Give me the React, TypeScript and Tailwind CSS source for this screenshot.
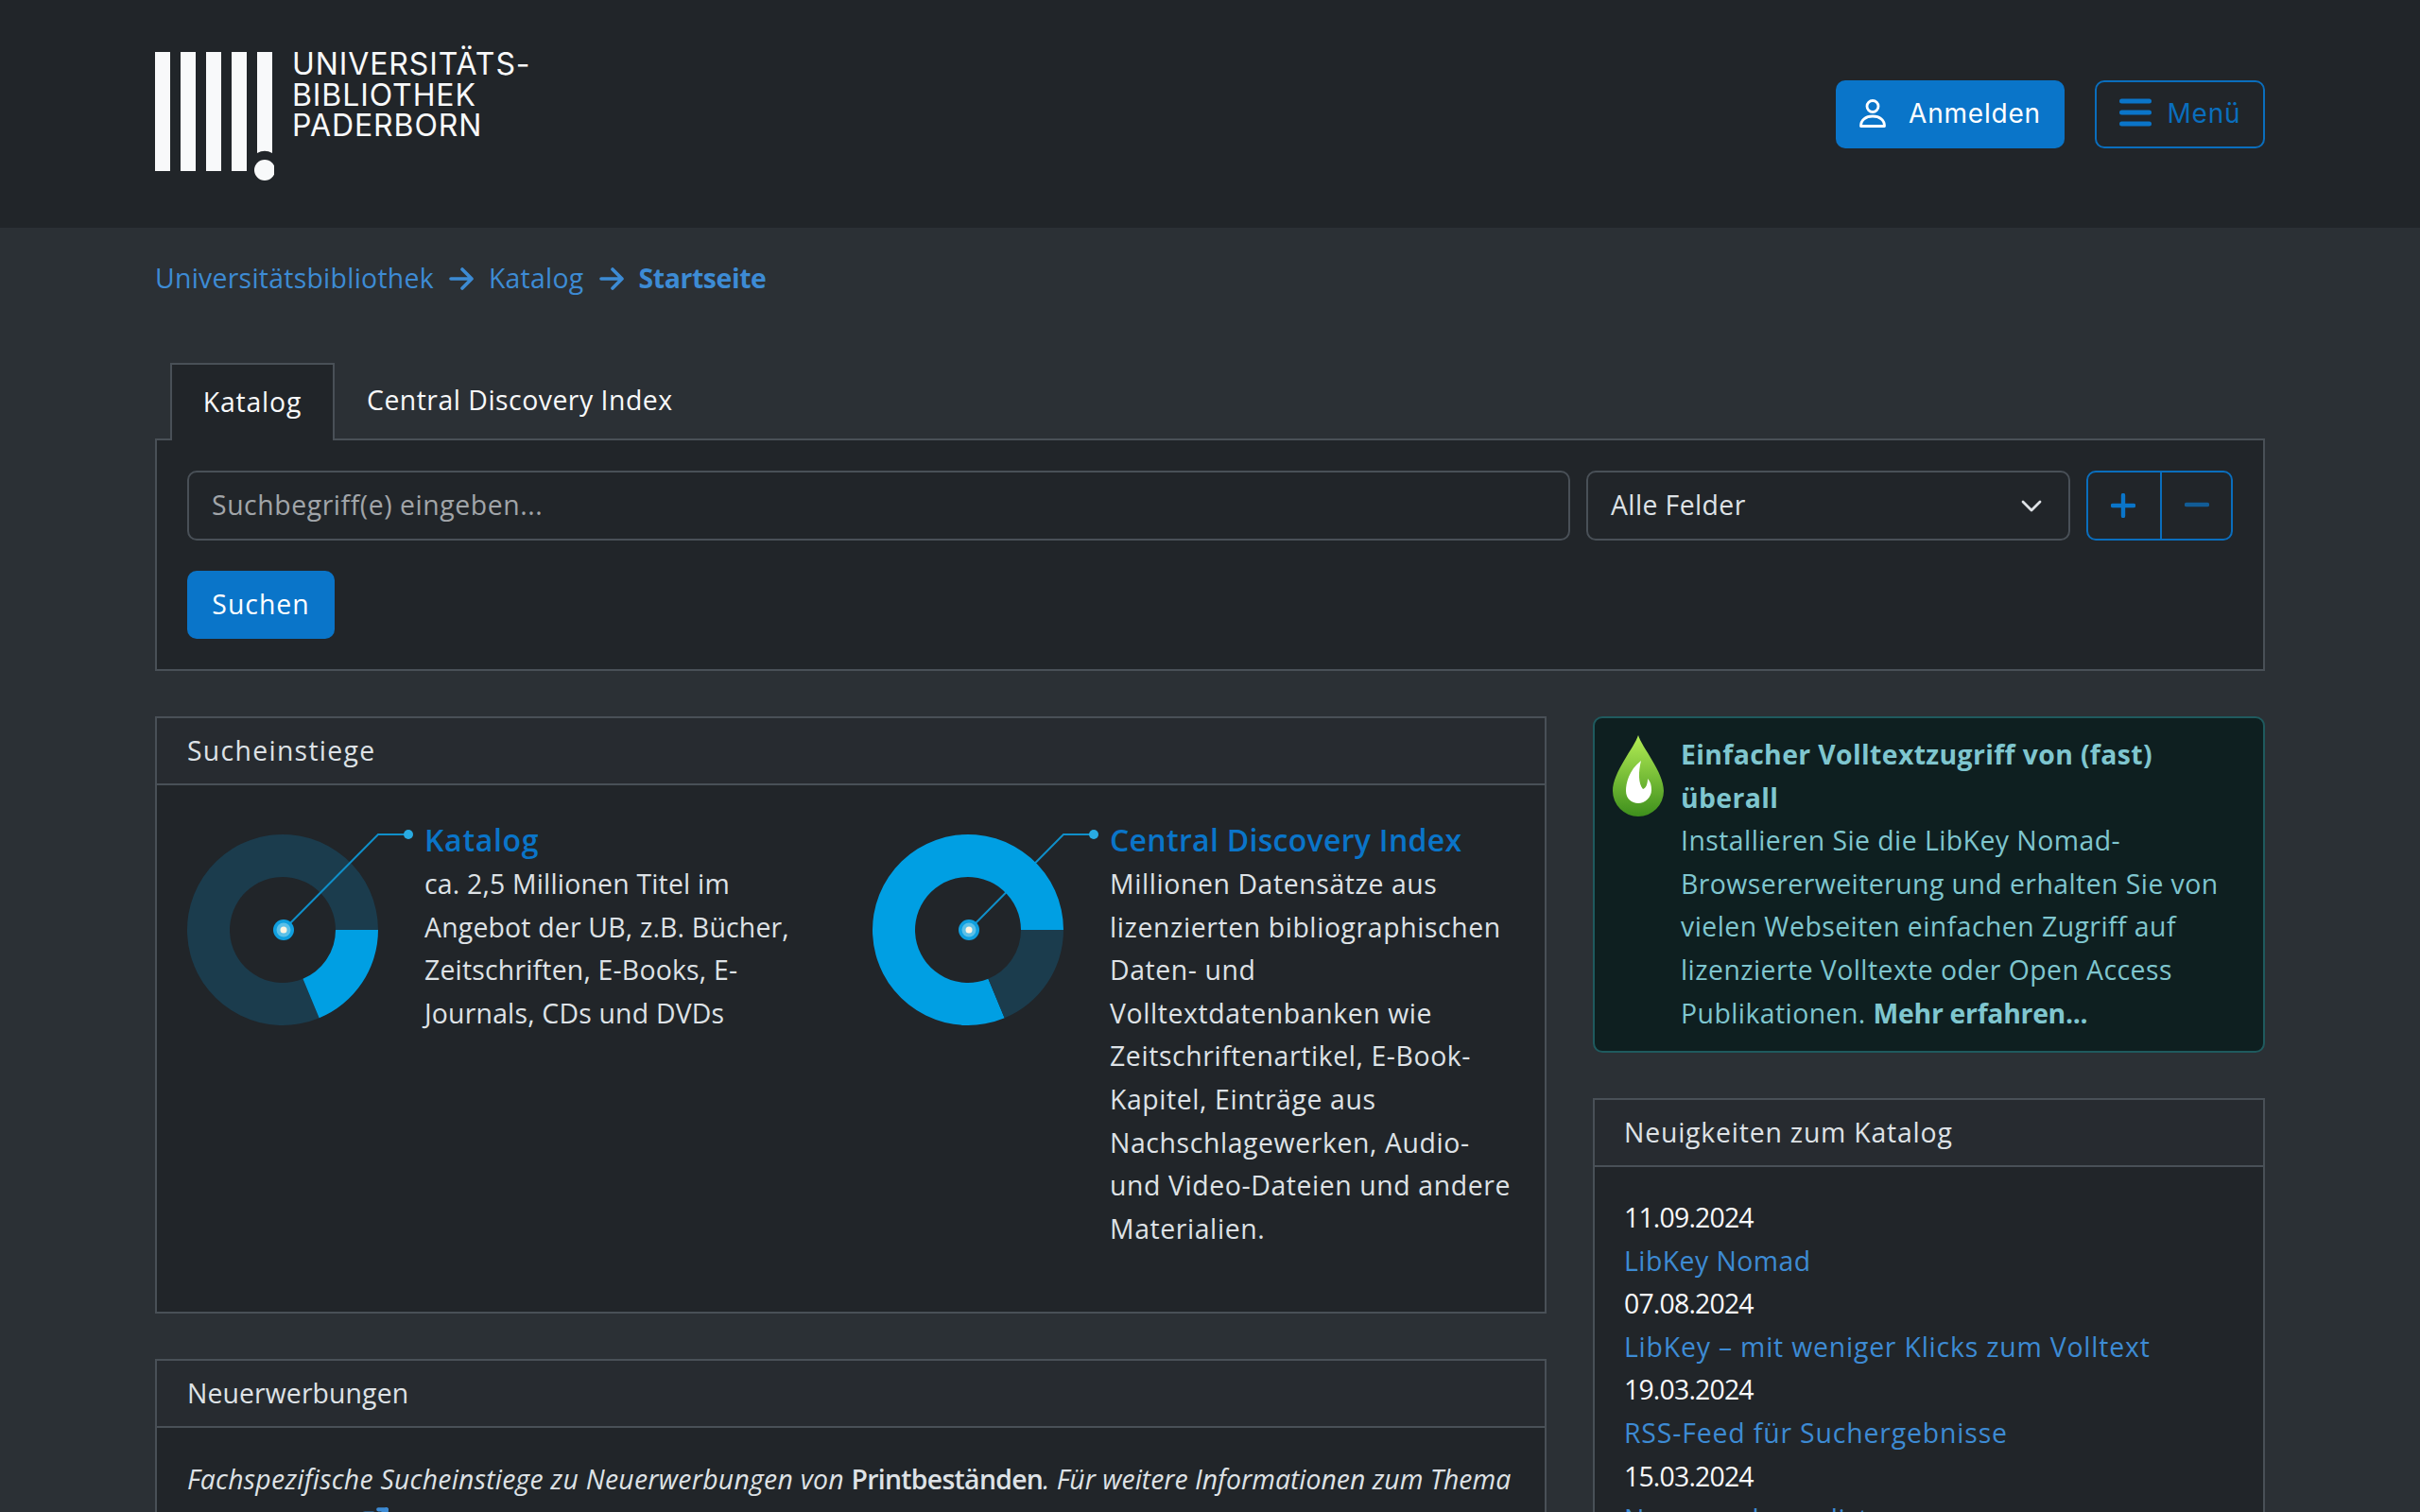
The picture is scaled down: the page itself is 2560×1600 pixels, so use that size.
import React from "react";
import { ExternalLink } from "lucide-react";

const body = "font-['Open_Sans','Noto_Sans',sans-serif]";

function Donut({ big, under }: { big: boolean; under: boolean }) {
  const bright = "#009fe3";
  const dim = "#1b3c4d";
  const cx = 101;
  const cy = 118;
  const ex = cx + 101 * Math.cos((67.5 * Math.PI) / 180);
  const ey = cy + 101 * Math.sin((67.5 * Math.PI) / 180);
  const ix = cx + 56 * Math.cos((67.5 * Math.PI) / 180);
  const iy = cy + 56 * Math.sin((67.5 * Math.PI) / 180);
  const small = `M${cx + 101} ${cy} A101 101 0 0 1 ${ex} ${ey} L${ix} ${iy} A56 56 0 0 0 ${cx + 56} ${cy} Z`;
  const large = `M${cx + 101} ${cy} A101 101 0 1 0 ${ex} ${ey} L${ix} ${iy} A56 56 0 1 1 ${cx + 56} ${cy} Z`;
  const line = (
    <path d={`M${cx + 1} ${cy} L${cx + 101} ${cy - 101} H${cx + 133}`} fill="none" stroke="#0f8fc9" strokeWidth="2" />
  );
  return (
    <svg width="240" height="225" viewBox="0 0 240 225" className="shrink-0 block">
      {under && line}
      <path d={large} fill={big ? bright : dim} />
      <path d={small} fill={big ? dim : bright} />
      {!under && line}
      <circle cx={cx + 133} cy={cy - 101} r="5" fill="#29abe2" />
      <circle cx={cx + 1} cy={cy} r="11" fill="#0f9fdf" />
      <circle cx={cx + 1} cy={cy} r="7.5" fill="#5cc0e8" />
      <circle cx={cx + 1} cy={cy} r="3.5" fill="#fff4e0" />
    </svg>
  );
}

function Card({ title, children, className, titleClass }: { title: string; children: React.ReactNode; className?: string; titleClass?: string }) {
  return (
    <section className={`border-2 border-[#495057] bg-[#212529] ${className ?? ""}`}>
      <h2 className={`h-[71px] flex items-center px-[32px] bg-[#272b30] border-b-2 border-[#495057] text-[#dee2e6] text-[28.4px] font-normal ${titleClass ?? ""}`}>
        {title}
      </h2>
      {children}
    </section>
  );
}

function Arrow() {
  return (
    <svg width="26" height="24" viewBox="0 0 26 24" fill="none" stroke="#3d8bd4" strokeWidth="3.6" strokeLinecap="round" strokeLinejoin="round">
      <path d="M2 12H24M14 2l10 10-10 10" />
    </svg>
  );
}

export default function App() {
  return (
    <div className={`h-[1600px] overflow-hidden bg-[#2b3035] text-[#dee2e6] text-[28.4px] leading-[45.6px] tracking-[0.45px] ${body}`}>
      <header className="h-[241px] bg-[#212529] px-[164px] flex items-center justify-between">
        <div className="flex items-start self-start pt-[55px]">
          <svg width="126" height="138" viewBox="0 0 126 138" className="block">
            <g fill="#f8f9fa">
              <rect x="0" y="0" width="16" height="126" />
              <rect x="27" y="0" width="16" height="126" />
              <rect x="54" y="0" width="16" height="126" />
              <rect x="81" y="0" width="16" height="126" />
              <path d="M108 0h16v107a16 16 0 0 0-16 0z" />
              <circle cx="116" cy="125" r="11" />
            </g>
          </svg>
          <div className="ml-[19px] -mt-[3px] font-['Inter',sans-serif] text-[32px] leading-[32.5px] text-[#f8f9fa] tracking-[0.9px]">
            <div>UNIVERSITÄTS-</div>
            <div>BIBLIOTHEK</div>
            <div>PADERBORN</div>
          </div>
        </div>
        <div className="flex gap-[32px] font-['Inter',sans-serif] text-[28px] tracking-[0.8px]">
          <button className="h-[72px] w-[242px] rounded-[10px] bg-[#0a75c9] text-white flex items-center justify-center gap-[24px]">
            <svg width="28" height="30" viewBox="0 0 28 30" fill="none" stroke="white" strokeWidth="2.8" strokeLinejoin="round" className="-mt-[2px]">
              <circle cx="14" cy="7.5" r="6" />
              <path d="M1.5 28.5c0-6.5 5-10.5 12.500-10.500s12.500 4 12.500 10.500z" />
            </svg>
            Anmelden
          </button>
          <button className="h-[72px] w-[180px] rounded-[10px] border-2 border-[#0a6ebd] text-[#0a6ebd] flex items-center justify-center gap-[17px]">
            <svg width="34" height="30" viewBox="0 0 34 30" fill="none" stroke="#0a75c9" strokeWidth="5" strokeLinecap="round" className="-mt-[4px]">
              <path d="M2.500 3h29M2.500 15h29M2.500 27h29" />
            </svg>
            Menü
          </button>
        </div>
      </header>

      <main className="px-[164px]">
        <nav className="flex items-center h-[107px] pt-[1px] text-[#3d8bd4] gap-[16px] tracking-[0.27px]">
          <span>Universitätsbibliothek</span>
          <Arrow />
          <span>Katalog</span>
          <Arrow />
          <span className="font-bold tracking-[-0.4px]">Startseite</span>
        </nav>

        <div className="pl-[16px] flex mt-[36px] h-[80px] relative z-10 text-[#f8f9fa]">
          <div className="w-[174px] h-[82px] border-2 border-b-0 border-[#495057] bg-[#212529] flex items-center justify-center tracking-[0.8px]">Katalog</div>
          <div className="px-[34px] flex items-center tracking-[0.5px]">Central Discovery Index</div>
        </div>
        <section className="h-[246px] border-2 border-[#495057] bg-[#212529] px-[32px] pt-[32px]">
          <div className="flex gap-[17px] h-[74px]">
            <div className="flex-1 rounded-[10px] border-2 border-[#495057] flex items-center px-[24px] text-[#a1a5a9] tracking-[0.56px]">Suchbegriff(e) eingeben...</div>
            <div className="w-[512px] rounded-[10px] border-2 border-[#495057] flex items-center justify-between pl-[24px] pr-[28px] tracking-[0.4px]">
              Alle Felder
              <svg width="22" height="14" viewBox="0 0 22 14" fill="none" stroke="#dee2e6" strokeWidth="2.800" strokeLinecap="round" strokeLinejoin="round">
                <path d="M2 3l9 9 9-9" />
              </svg>
            </div>
            <div className="flex w-[155px] rounded-[10px] border-2 border-[#0a6ebd]">
              <div className="w-[78px] border-r-2 border-[#0a6ebd] flex items-center justify-center pr-[2px]">
                <svg width="26" height="26" viewBox="0 0 26 26" stroke="#0a75c9" strokeWidth="4.400" strokeLinecap="round"><path d="M13 2v22M2 13h22" /></svg>
              </div>
              <div className="flex-1 flex items-center justify-center">
                <svg width="26" height="26" viewBox="0 0 26 26" stroke="#125c96" strokeWidth="4.400" strokeLinecap="round"><path d="M2 12h22" /></svg>
              </div>
            </div>
          </div>
          <button className="mt-[32px] h-[72px] w-[156px] rounded-[10px] bg-[#0a75c9] text-white tracking-[1px]">Suchen</button>
        </section>

        <div className="flex gap-[49px] mt-[48px] items-start">
          <div className="w-[1472px] shrink-0 flex flex-col gap-[48px]">
            <Card title="Sucheinstiege" className="h-[632px]" titleClass="tracking-[1.3px]">
              <div className="flex px-[32px] pt-[34px]">
                <div className="w-[725px] flex pr-[70px]">
                  <div className="w-[251px] shrink-0 mt-[1px]"><Donut big={false} under={false} /></div>
                  <div className="tracking-[0.2px]">
                    <a className="block text-[#0a75c9] font-semibold text-[32px] leading-[48px] tracking-[0.7px]">Katalog</a>
                    ca. 2,5 Millionen Titel im Angebot der UB, z.B. Bücher, Zeitschriften, E-Books, E-Journals, CDs und DVDs
                  </div>
                </div>
                <div className="flex flex-1">
                  <div className="w-[251px] shrink-0 mt-[1px]"><Donut big under /></div>
                  <div className="tracking-[0.6px]">
                    <a className="block text-[#0a75c9] font-semibold text-[32px] leading-[48px] tracking-[0.3px]">Central Discovery Index</a>
                    Millionen Datensätze aus lizenzierten bibliographischen Daten- und Volltextdatenbanken wie Zeitschriftenartikel, E-Book-Kapitel, Einträge aus Nachschlagewerken, Audio- und Video-Dateien und andere Materialien.
                  </div>
                </div>
              </div>
            </Card>
            <Card title="Neuerwerbungen" titleClass="tracking-[0.1px]">
              <div className="px-[32px] pt-[32px]">
                <p className="italic tracking-[0.25px] whitespace-nowrap">
                  Fachspezifische Sucheinstiege zu Neuerwerbungen von{" "}
                  <b className="not-italic font-semibold tracking-[-0.7px]">Printbeständen</b>
                  <span className="tracking-[0px]">. Für weitere Informationen zum Thema</span>
                  <br />
                  haben wir ein{" "}
                  <span className="not-italic text-[#3d8bd4]">
                    <ExternalLink className="inline-block w-[34px] h-[34px] -mt-[8px]" strokeWidth={3} /> Hinweise für Sie zusammengestellt.
                  </span>
                </p>
              </div>
            </Card>
          </div>

          <div className="flex-1 flex flex-col gap-[48px]">
            <div className="h-[356px] rounded-[10px] border-2 border-[#1f5a5e] bg-[#0e1f20] text-[#7fc6cf] flex pl-[18px] pr-[24px] pt-[16px]">
              <svg width="56" height="88" viewBox="0 0 56 88" className="shrink-0 mt-[1px]">
                <defs>
                  <linearGradient id="drop" x1="0" y1="0" x2="0" y2="1">
                    <stop offset="0" stopColor="#b4ee55" />
                    <stop offset="1" stopColor="#3e8f1c" />
                  </linearGradient>
                </defs>
                <path d="M28 1C24 14 1 40 1 60a27 27 0 0 0 54 0C55 40 32 14 28 1z" fill="url(#drop)" />
                <path d="M31 28C18 38 15 52 15 60c0 8 6 13 13 13s14-6 14-14c0-5-1-9-4-12 0 6-2 10-5 11-5-6-5-18-2-30z" fill="#fff" />
              </svg>
              <div className="ml-[17px]">
                <div className="font-bold tracking-[0.36px]">Einfacher Volltextzugriff von (fast) überall</div>
                Installieren Sie die LibKey Nomad-Browsererweiterung und erhalten Sie von vielen Webseiten einfachen Zugriff auf lizenzierte Volltexte oder Open Access Publikationen.{" "}
                <b className="font-bold tracking-[-0.3px]">Mehr erfahren...</b>
              </div>
            </div>
            <Card title="Neuigkeiten zum Katalog" titleClass="!px-[31px] tracking-[0.8px]">
              <div className="px-[31px] pt-[31px] text-[#3d8bd4] tracking-[0.45px]">
                <div className="text-[#f8f9fa] tracking-[-0.8px]">11.09.2024</div>
                <div>LibKey Nomad</div>
                <div className="text-[#f8f9fa] tracking-[-0.8px]">07.08.2024</div>
                <div className="tracking-[0.8px]">LibKey – mit weniger Klicks zum Volltext</div>
                <div className="text-[#f8f9fa] tracking-[-0.8px]">19.03.2024</div>
                <div className="tracking-[0.85px]">RSS-Feed für Suchergebnisse</div>
                <div className="text-[#f8f9fa] tracking-[-0.8px]">15.03.2024</div>
                <div>Neuerwerbungslisten</div>
              </div>
            </Card>
          </div>
        </div>
      </main>
    </div>
  );
}
